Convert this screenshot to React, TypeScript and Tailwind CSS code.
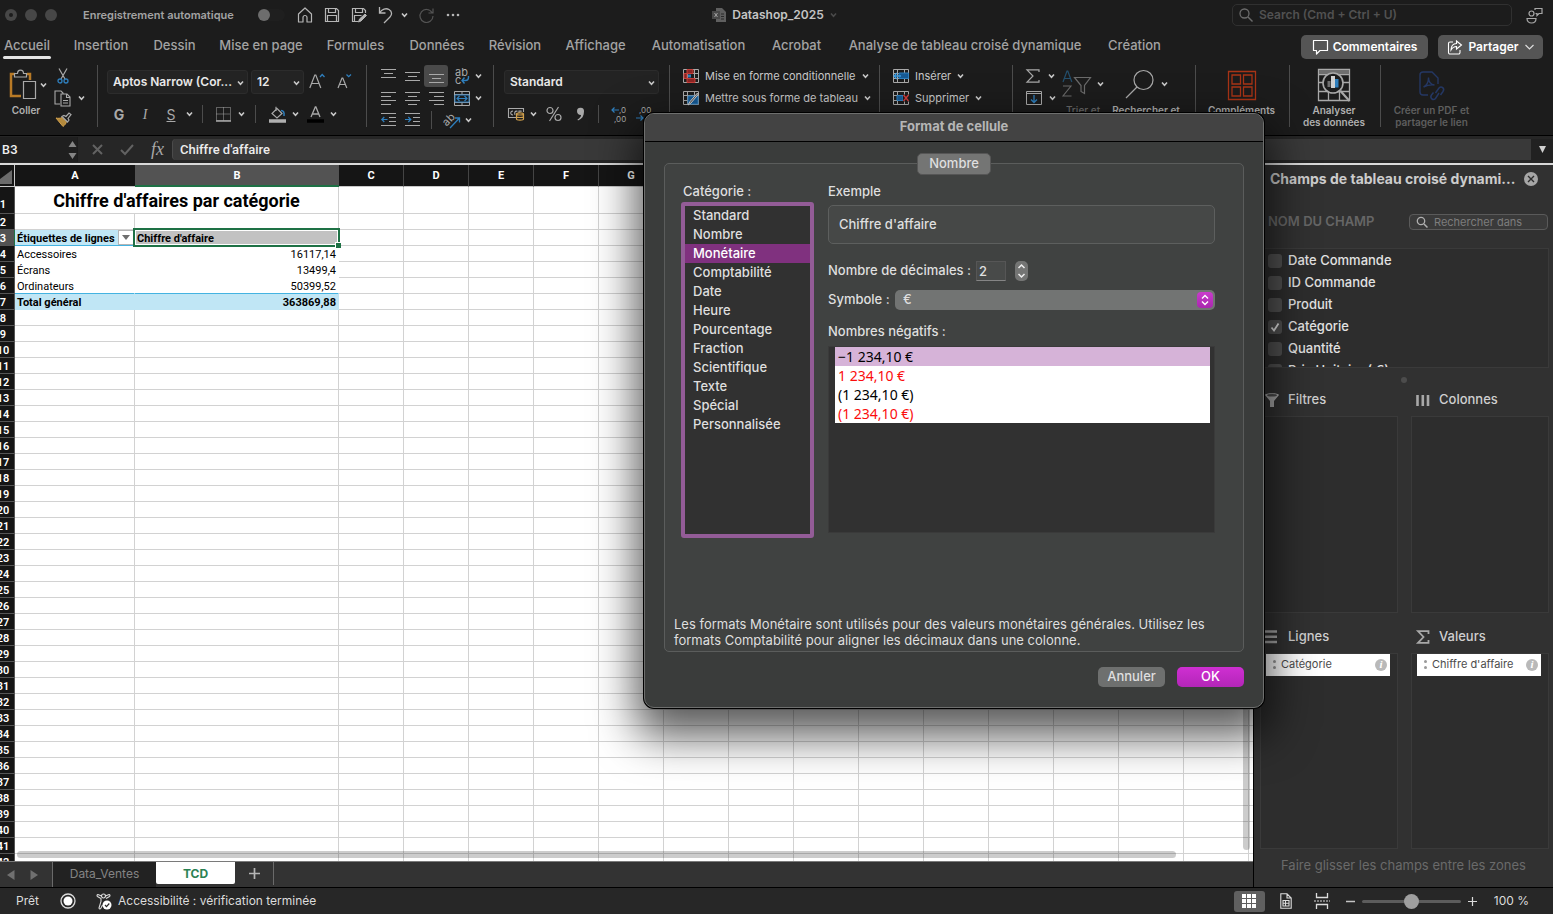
import { type ReactNode } from "react";
import clsx from "clsx";

const GREY = "#a9a9a9";
const BLUE = "#2f7fbd";

const MENU_TABS = [
  { label: "Accueil", width: "w-[54px]" },
  { label: "Insertion", width: "w-[94px]" },
  { label: "Dessin", width: "w-[53px]" },
  { label: "Mise en page", width: "w-[120px]" },
  { label: "Formules", width: "w-[69px]" },
  { label: "Données", width: "w-[94px]" },
  { label: "Révision", width: "w-[62px]" },
  { label: "Affichage", width: "w-[99px]" },
  { label: "Automatisation", width: "w-[107px]" },
  { label: "Acrobat", width: "w-[89px]" },
  { label: "Analyse de tableau croisé dynamique", width: "w-[248px]" },
  { label: "Création", width: "w-[91px]" },
];

const CATEGORIES = [
  "Standard",
  "Nombre",
  "Monétaire",
  "Comptabilité",
  "Date",
  "Heure",
  "Pourcentage",
  "Fraction",
  "Scientifique",
  "Texte",
  "Spécial",
  "Personnalisée",
];

const NEGATIVES = [
  { text: "−1 234,10 €", red: false },
  { text: "1 234,10 €", red: true },
  { text: "(1 234,10 €)", red: false },
  { text: "(1 234,10 €)", red: true },
];

const FIELDS = ["Date Commande", "ID Commande", "Produit", "Catégorie", "Quantité", "Prix Unitaire ( €)"];

// the last column only shows its first few pixels
const COLUMNS = ["C", "D", "E", "F", "G", "H", "I", "J", "K", "L", "M", "N", "O", "P", ""];

interface IconProps {
  w: number;
  h: number;
  children: ReactNode;
  stroke?: string;
  className?: string;
}

function Icon({ w, h, children, stroke = GREY, className }: IconProps) {
  return (
    <svg
      width={w}
      height={h}
      viewBox={`0 0 ${w} ${h}`}
      fill="none"
      stroke={stroke}
      className={clsx("shrink-0 overflow-visible", className)}
      aria-hidden="true"
    >
      {children}
    </svg>
  );
}

function Caret({ color = "#c8c8c8" }: { color?: string }) {
  return (
    <Icon w={7} h={6} stroke={color}>
      <path d="M1 1.5 3.5 4.2 6 1.5" strokeWidth="1.6" />
    </Icon>
  );
}

function Divider() {
  return <div className="w-px h-[62px] mt-[5px] bg-[#4c4c4c] shrink-0" />;
}

function ShortDivider() {
  return <div className="w-px h-[18px] bg-[#4c4c4c] shrink-0" />;
}

function Tool({ label, className, children }: { label: string; className: string; children: ReactNode }) {
  return (
    <button aria-label={label} className={clsx("flex items-center justify-center h-[22px] shrink-0", className)}>
      {children}
    </button>
  );
}

/* ---------- Title bar and tabs ---------- */

function TitleBar() {
  return (
    <header className="flex items-center h-[30px] text-[11px] font-semibold">
      <div className="flex flex-1 items-center">
        <div className="flex gap-2 pl-[5px]">
          <span className="flex size-3 items-center justify-center rounded-full bg-[#474747]">
            <span className="size-1 rounded-full bg-[#1c1c1c]" />
          </span>
          <span className="size-3 rounded-full bg-[#474747]" />
          <span className="size-3 rounded-full bg-[#474747]" />
        </div>
        <span className="ml-[26px] w-[175px] text-[#a3a3a3]">Enregistrement automatique</span>
        <button role="switch" aria-checked="false" aria-label="Enregistrement automatique" className="flex w-[27px] rounded-full bg-[#1f1f1f]">
          <span className="size-3 rounded-full bg-[#6d6d6d]" />
        </button>
        <div className="ml-[6px] flex items-center">
          <Tool label="Accueil" className="w-[27px]">
            <Icon w={16} h={16} stroke="#b5b5b5">
              <path d="M1.5 7 8 1l6.500 6v8H10v-4.500a2 2 0 0 0-4 0V15H1.500z" strokeWidth="1.2" strokeLinejoin="round" />
            </Icon>
          </Tool>
          <Tool label="Enregistrer" className="w-[27px]">
            <Icon w={16} h={16} stroke="#b5b5b5">
              <path d="M1.500 1.500h11l2 2v11h-13zM4.500 1.500v4h7v-4M3.500 14.500v-6h9v6" strokeWidth="1.2" />
            </Icon>
          </Tool>
          <Tool label="Enregistrer sous" className="w-[27px]">
            <Icon w={16} h={16} stroke="#b5b5b5">
              <path d="M7 14.500H1.500v-13h11l2 2V6M4.500 1.500v4h7v-4M3.500 14.500v-6h7" strokeWidth="1.2" />
              <path d="m7.500 15 1-3 5.500-5 1.500 1.500-5.500 5.500z" fill="#b5b5b5" />
            </Icon>
          </Tool>
          <Tool label="Annuler la frappe" className="w-[27px]">
            <Icon w={15} h={16} stroke="#b5b5b5">
              <path d="M1.500 0v6H7.500M1.500 6C4 2 8 .8 11 2.500c3.500 2 3 5.500 1 7.500L6 16" strokeWidth="1.3" />
            </Icon>
          </Tool>
          <Tool label="Historique" className="w-[11px]">
            <Caret />
          </Tool>
          <Tool label="Répéter" className="ml-[2px] w-[28px]">
            <Icon w={15} h={15} stroke="#545454">
              <path d="M13 4.500A6.500 6.500 0 1 0 14 8M14 .5v4.500H9.500" strokeWidth="1.2" />
            </Icon>
          </Tool>
          <Tool label="Plus" className="w-[26px]">
            <Icon w={14} h={4} stroke="none">
              <g fill="#b5b5b5">
                <circle cx="2" cy="2" r="1.3" />
                <circle cx="7" cy="2" r="1.3" />
                <circle cx="12" cy="2" r="1.3" />
              </g>
            </Icon>
          </Tool>
        </div>
      </div>
      <div className="flex items-center gap-1.5 pl-[6px] text-[12px] text-[#c4c4c4]">
        <Icon w={14} h={14} stroke="none">
          <path d="M4 0h6l4 4v10H4z" fill="#5f5f5f" />
          <path d="M0 3h8v8H0z" fill="#484848" />
          <path d="m2.500 5 3 4m0-4-3 4" stroke="#a0a0a0" />
          <path d="M9 6h3M9 8.500h3M9 11h3" stroke="#2b2b2b" />
        </Icon>
        Datashop_2025
        <Caret color="#4a4a4a" />
      </div>
      <div className="flex flex-1 items-center justify-end pr-[10px]">
        <label className="mr-[14px] flex h-[22px] w-[280px] items-center gap-1.5 rounded-[5px] border border-[#303030] pl-[6px]">
          <Icon w={14} h={14} stroke="#6c6c6c">
            <circle cx="5.500" cy="5.500" r="4.500" strokeWidth="1.3" />
            <path d="m9 9 4.500 4.500" strokeWidth="1.4" />
          </Icon>
          <input
            aria-label="Rechercher"
            placeholder="Search (Cmd + Ctrl + U)"
            className="min-w-0 flex-1 bg-transparent text-[12px] font-semibold outline-none placeholder:text-[#515151]"
          />
        </label>
        <Icon w={17} h={17} stroke="#a8a8a8">
          <circle cx="5.500" cy="6.500" r="2.500" strokeWidth="1.2" />
          <path d="M1 11.500h9c0 3-2 4.500-4.500 4.500S1 14.500 1 11.500zM9 3V1.500h7v5h-3l-2 2v-2H9.500" strokeWidth="1.2" />
        </Icon>
      </div>
    </header>
  );
}

function MenuTabs() {
  return (
    <nav className="flex h-[30px] items-start justify-between pr-[10px] text-[13px] font-medium text-[#a3a3a3]">
      <div className="flex">
        {MENU_TABS.map((tab, i) => (
          <button key={tab.label} className={clsx("flex shrink-0 flex-col items-center whitespace-nowrap", tab.width)}>
            <span className="h-[26px] leading-[31px]">{tab.label}</span>
            {i === 0 && <span className="h-[3px] w-[48px] rounded-full bg-[#e4e4e4]" />}
          </button>
        ))}
      </div>
      <div className="flex gap-[10px] pt-[5px] text-[12px] font-semibold text-white">
        <button className="flex h-6 w-[127px] items-center justify-center gap-1 rounded-[5px] bg-[#555555]">
          <Icon w={17} h={16} stroke="#ffffff">
            <path d="M1.500 1.500h14v10H8L4.500 15v-3.500h-3z" strokeWidth="1.2" strokeLinejoin="round" />
          </Icon>
          Commentaires
        </button>
        <button className="flex h-6 w-[105px] items-center justify-center gap-1.5 rounded-[5px] bg-[#555555]">
          <Icon w={15} h={15} stroke="#ffffff">
            <path d="M6 2H3a1.500 1.500 0 0 0-1.500 1.500v9A1.500 1.500 0 0 0 3 14h8.500a1.500 1.500 0 0 0 1.500-1.500V10M9.500 1l5 4-5 4V6.500C7 6.500 5.500 7.500 4 10c0-4 2-6.500 5.500-6.500z" strokeWidth="1.1" />
          </Icon>
          Partager
          <Icon w={9} h={6} stroke="#dddddd">
            <path d="m.5 1 4 4 4-4" strokeWidth="1.2" />
          </Icon>
        </button>
      </div>
    </nav>
  );
}

/* ---------- Ribbon ---------- */

function LinesIcon({ d }: { d: string }) {
  return (
    <Icon w={15} h={14}>
      <path d={d} strokeWidth="1.1" />
    </Icon>
  );
}

function ClipboardGroup() {
  return (
    <div className="flex w-[97px] shrink-0 pt-[5px]">
      <div className="w-[51px] pt-[4px] pl-[9px]">
        <button aria-label="Coller" className="flex items-center gap-[3px]">
          <Icon w={28} h={31}>
            <path d="M6 5H2v22h10M18 5h3v6" stroke="#b87a26" strokeWidth="2.500" />
            <path d="M5.500 8V4.500h3c0-4.500 6-4.500 6 0h3V8z" fill="#1c1c1c" strokeWidth="1.2" />
            <path d="M14.500 12.500h12v17h-12z" fill="#1c1c1c" strokeWidth="1.2" />
          </Icon>
          <Caret />
        </button>
        <div className="w-[34px] text-center text-[10px] leading-[20px] font-semibold text-[#b0b0b0]">Coller</div>
      </div>
      <div className="flex flex-col">
        <Tool label="Couper" className="w-[24px]">
          <Icon w={12} h={16}>
            <path d="M2 .5 8 11M10 .5 4 11" strokeWidth="1.2" />
            <circle cx="3" cy="13" r="2" stroke={BLUE} strokeWidth="1.3" />
            <circle cx="9" cy="13" r="2" stroke={BLUE} strokeWidth="1.3" />
          </Icon>
        </Tool>
        <Tool label="Copier" className="w-[36px] gap-[6px]">
          <Icon w={18} h={17}>
            <path d="M6 14H1V1h6l2 2v1M7 4h6l3 3v9H7zM12.500 4v3.500H16M9 10.500h5M9 13h5" strokeWidth="1.1" />
          </Icon>
          <Caret />
        </Tool>
        <Tool label="Reproduire la mise en forme" className="w-[24px]">
          <Icon w={17} h={16}>
            <path d="m1 6 7 8.500c2-1.500 3-3 3.500-5L7 5.500C5 6.500 3 6.500 1 6z" fill="#b48a3d" stroke="#d1a04c" />
            <path d="m7 4.500 5.500 5.500 1.500-2-1-1.500 3-4L14 1l-3 3.500-2-1z" fill="#1c1c1c" strokeWidth="1.2" />
          </Icon>
        </Tool>
      </div>
    </div>
  );
}

function RibbonSelect({ label, value, className }: { label: string; value: string; className: string }) {
  return (
    <div className={clsx("relative shrink-0", className)}>
      <select
        aria-label={label}
        className="block h-6 w-full appearance-none rounded-[3px] border border-[#2c2c2c] bg-[#232323] pl-[5px] text-[12px] font-semibold text-[#e8e8e8] outline-none"
      >
        <option>{value}</option>
      </select>
      <span className="pointer-events-none absolute top-[10px] right-1">
        <Caret />
      </span>
    </div>
  );
}

function FontGroup() {
  return (
    <div className="w-[268px] shrink-0 pt-[10px] pl-[9px]">
      <div className="flex gap-[3px]">
        <RibbonSelect label="Police" value="Aptos Narrow (Cor..." className="w-[141px]" />
        <RibbonSelect label="Taille" value="12" className="w-[53px]" />
        <Tool label="Agrandir la police" className="w-[20px]">
          <Icon w={16} h={16}>
            <path d="m.8 15 5-13h1l5 13M2.500 10.500h7.500" strokeWidth="1.2" />
            <path d="m11 4 2.200-2.500L15.500 4" stroke={BLUE} strokeWidth="1.3" />
          </Icon>
        </Tool>
        <Tool label="Réduire la police" className="w-[28px]">
          <Icon w={15} h={16}>
            <path d="m1 15 4-10h.8l4 10M2.500 11.500h6" strokeWidth="1.2" />
            <path d="m9.500 1.500 2.200 2.200L14 1.500" stroke={BLUE} strokeWidth="1.3" />
          </Icon>
        </Tool>
      </div>
      <div className="mt-[9px] flex items-center text-[14px] text-[#a9a9a9]">
        <Tool label="Gras" className="w-[24px] font-bold">G</Tool>
        <Tool label="Italique" className="w-[28px] font-['Liberation_Serif',serif] italic">I</Tool>
        <Tool label="Souligné" className="w-[24px] underline">S</Tool>
        <Tool label="Options de soulignement" className="w-[12px]"><Caret /></Tool>
        <span className="w-[7px]" />
        <ShortDivider />
        <Tool label="Bordures" className="ml-[8px] w-[24px]">
          <Icon w={15} h={15}>
            <path d="M.5.5h14v13H.5zM7.500.5v13M.5 7h14" strokeDasharray="1 1" />
            <path d="M0 14h15" strokeWidth="1.500" />
          </Icon>
        </Tool>
        <Tool label="Options de bordures" className="w-[13px]"><Caret /></Tool>
        <span className="w-[7px]" />
        <ShortDivider />
        <Tool label="Couleur de remplissage" className="ml-[8px] w-[26px]">
          <Icon w={17} h={17}>
            <path d="m8 2.500 5 5-5 4.500-5-4.500zM7 5V.8" strokeWidth="1.2" />
            <path d="M12 4.500c2.500 0 3.500 2 3 5.500" stroke={BLUE} strokeWidth="1.500" />
            <path d="M0 15h17" strokeWidth="3.500" stroke="#b0b0b0" />
          </Icon>
        </Tool>
        <Tool label="Options de remplissage" className="w-[10px]"><Caret /></Tool>
        <Tool label="Couleur de police" className="ml-[2px] w-[26px]">
          <Icon w={17} h={17}>
            <path d="m4 11 4.300-10h.6L13 11M5.500 8h6" strokeWidth="1.3" />
            <path d="M0 15h17" strokeWidth="3.500" stroke="#000000" />
          </Icon>
        </Tool>
        <Tool label="Options de couleur" className="w-[10px]"><Caret /></Tool>
      </div>
    </div>
  );
}

function AlignGroup() {
  return (
    <div className="w-[126px] shrink-0 pt-[5px] pl-[9px]">
      <div className="flex">
        <Tool label="Aligner en haut" className="w-[24px]"><LinesIcon d="M0 .5h15M3 4.500h9M0 8.500h15" /></Tool>
        <Tool label="Aligner au centre" className="w-[24px]"><LinesIcon d="M0 3.500h15M3 7.500h9M0 11.500h15" /></Tool>
        <Tool label="Aligner en bas" className="w-[24px] rounded-[3px] bg-[#4a4a4a]"><LinesIcon d="M0 5.500h15M3 9.500h9M0 13.500h15" /></Tool>
        <Tool label="Renvoyer à la ligne" className="w-[29px] gap-[5px] pl-[11px]">
          <svg width="15" height="17" viewBox="0 0 15 17" fill="none" className="shrink-0 overflow-visible" aria-hidden="true">
            <text x="0" y="8" fontSize="11" fill={GREY}>ab</text>
            <text x="0" y="16" fontSize="11" fill={GREY}>c</text>
            <path d="M13.500 8v1.500c0 2-1 3-3 3H7m2.500-3L7 12.500l2.500 3" stroke={BLUE} strokeWidth="1.4" />
          </svg>
          <Caret />
        </Tool>
      </div>
      <div className="flex">
        <Tool label="Aligner à gauche" className="w-[24px]"><LinesIcon d="M0 1.500h15M0 5.500h10M0 9.500h15M0 13.500h10" /></Tool>
        <Tool label="Centrer" className="w-[24px]"><LinesIcon d="M0 1.500h15M3 5.500h9M0 9.500h15M3 13.500h9" /></Tool>
        <Tool label="Aligner à droite" className="w-[24px]"><LinesIcon d="M0 1.500h15M5 5.500h10M0 9.500h15M5 13.500h10" /></Tool>
        <Tool label="Fusionner" className="w-[29px] gap-[5px] pl-[10px]">
          <Icon w={16} h={15}>
            <path d="M.5.5h15v14H.5zM.5 3.500h15M.5 11.500h15M8 .5v3M8 11.500v3" />
            <path d="M1 4h14v7H1z" stroke={BLUE} />
            <path d="M3 7.500h10M5.500 5 3 7.500 5.500 10M10.500 5 13 7.500 10.500 10" stroke={BLUE} strokeWidth="1.2" />
          </Icon>
          <Caret />
        </Tool>
      </div>
      <div className="flex items-center">
        <Tool label="Diminuer le retrait" className="w-[24px]">
          <Icon w={15} h={14}>
            <path d="M0 .5h15M8 4.500h7M8 8.500h7M0 12.500h15" strokeWidth="1.1" />
            <path d="M6.500 6.500H.8M3.300 4 .8 6.500 3.300 9" stroke={BLUE} strokeWidth="1.2" />
          </Icon>
        </Tool>
        <Tool label="Augmenter le retrait" className="w-[24px]">
          <Icon w={15} h={14}>
            <path d="M0 .5h15M8 4.500h7M8 8.500h7M0 12.500h15" strokeWidth="1.1" />
            <path d="M0 6.500h5.800M3.300 4l2.500 2.500L3.300 9" stroke={BLUE} strokeWidth="1.2" />
          </Icon>
        </Tool>
        <span className="w-[7px]" />
        <ShortDivider />
        <Tool label="Orientation" className="ml-[8px] w-[34px] gap-[4px]">
          <svg width="18" height="17" viewBox="0 0 18 17" fill="none" className="shrink-0 overflow-visible" aria-hidden="true">
            <text x="0" y="12" fontSize="11" fill={GREY} transform="rotate(-45 5 9)">ab</text>
            <path d="M7 16 16.500 6M12 6h4.500v4.500" stroke={BLUE} strokeWidth="1.3" />
          </svg>
          <Caret />
        </Tool>
      </div>
    </div>
  );
}

function NumberGroup() {
  return (
    <div className="w-[175px] shrink-0 pt-[10px] pl-[10px]">
      <RibbonSelect label="Format de nombre" value="Standard" className="w-[155px]" />
      <div className="mt-[9px] flex items-center text-[#a9a9a9]">
        <Tool label="Format comptable" className="w-[25px]">
          <Icon w={17} h={14}>
            <path d="M8 10.500H.5V1.500h15V5M5 4.200C2 3.500 2 8.500 5 7.800M9.500 4.200C6.500 3.500 6.500 6 7 7.800M13 5V4h-2v2" strokeWidth="1.1" />
            <path d="M8.500 7c0-1.500 7-1.500 7 0v5c0 1.500-7 1.500-7 0zM8.500 7c0 1.300 7 1.300 7 0M8.500 9.500c0 1.300 7 1.300 7 0" fill="#1c1c1c" stroke="#d1a04c" strokeWidth="1.2" />
          </Icon>
        </Tool>
        <Tool label="Options comptables" className="w-[8px]"><Caret /></Tool>
        <Tool label="Pourcentage" className="w-[33px]">
          <Icon w={16} h={16}>
            <circle cx="4" cy="4.500" r="3" strokeWidth="1.2" />
            <circle cx="12" cy="11.500" r="3" strokeWidth="1.2" />
            <path d="M12.500 1 3.500 15" strokeWidth="1.2" />
          </Icon>
        </Tool>
        <Tool label="Séparateur de milliers" className="w-[21px]">
          <Icon w={9} h={14} stroke="none">
            <path d="M1 4a3.500 3.500 0 1 1 7 .5C8 9 6 12 2 13.500l-.5-1C4 11 5 9.500 5 8 2.500 8 1 6.500 1 4z" fill={GREY} />
          </Icon>
        </Tool>
        <span className="w-[7px]" />
        <ShortDivider />
        <Tool label="Ajouter une décimale" className="ml-[12px] w-[17px]">
          <svg width="17" height="17" viewBox="0 0 17 17" fill="none" className="shrink-0 overflow-visible" aria-hidden="true">
            <text x="8" y="7" fontSize="8" fill={GREY}>,0</text>
            <text x="3" y="16" fontSize="8" fill={GREY}>,00</text>
            <path d="M8 4H1m2.500-2.500L1 4l2.500 2.500" stroke={BLUE} strokeWidth="1.2" />
          </svg>
        </Tool>
        <Tool label="Réduire les décimales" className="ml-[8px] w-[17px]">
          <svg width="17" height="17" viewBox="0 0 17 17" fill="none" className="shrink-0 overflow-visible" aria-hidden="true">
            <text x="3" y="7" fontSize="8" fill={GREY}>,00</text>
            <path d="M0 12h7M4.500 9.500 7 12l-2.500 2.500" stroke={BLUE} strokeWidth="1.2" />
          </svg>
        </Tool>
      </div>
    </div>
  );
}

function GridIcon({ children }: { children: ReactNode }) {
  return (
    <Icon w={16} h={15}>
      <path d="M.5.5h15v13H.5zM4.500.5v13M11.500.5v13M.5 4.500h15M.5 9.500h15" />
      {children}
    </Icon>
  );
}

function TextTool({ label, children }: { label: string; children: ReactNode }) {
  return (
    <button className="flex h-[22px] items-center gap-[6px] text-[11px] whitespace-nowrap text-[#c8c8c8]">
      {children}
      {label}
      <Caret />
    </button>
  );
}

function StyleGroup() {
  return (
    <div className="w-[209px] shrink-0 pt-[5px] pl-[13px]">
      <TextTool label="Mise en forme conditionnelle">
        <GridIcon>
          <path d="M4 .5h6v4H4zM4 9.500h8v4H4zM1 4.500h3v5H1z" fill="#8c2625" stroke="#c5403b" />
          <path d="M5 5.500h3v3H5z" fill={BLUE} stroke="none" />
        </GridIcon>
      </TextTool>
      <TextTool label="Mettre sous forme de tableau">
        <GridIcon>
          <path d="M5 5h10v8H5z" fill="#175a94" stroke={BLUE} />
          <path d="m5 14 2-3.500 7.500-8.500 1 1-7.500 9z" fill="#555555" stroke="#d0d0d0" />
        </GridIcon>
      </TextTool>
    </div>
  );
}

function CellsGroup() {
  return (
    <div className="w-[132px] shrink-0 pt-[5px] pl-[13px]">
      <TextTool label="Insérer">
        <GridIcon>
          <path d="M6 4h9.500v5.500H6z" fill="#175a94" stroke={BLUE} />
          <path d="M8 7H1m3-3L1 7l3 3" stroke="#3a9be0" strokeWidth="1.3" />
        </GridIcon>
      </TextTool>
      <TextTool label="Supprimer">
        <GridIcon>
          <path d="M4 4.500h6v5H4z" fill="#175a94" stroke={BLUE} />
          <path d="M10 3.500h6v7h-6z" fill="#1c1c1c" stroke="none" />
          <path d="m10.500 4 5 6m0-6-5 6" stroke="#d43c3c" strokeWidth="1.4" />
        </GridIcon>
      </TextTool>
    </div>
  );
}

function EditGroup() {
  return (
    <div className="flex w-[182px] shrink-0 items-start pt-[5px] pl-[13px]">
      <div className="w-[31px]">
        <Tool label="Somme automatique" className="w-[29px] gap-[8px]">
          <Icon w={14} h={14}>
            <path d="M13 3V.8H1l6 6.200-6 6.200h12V11" strokeWidth="1.2" />
          </Icon>
          <Caret />
        </Tool>
        <Tool label="Remplissage" className="w-[29px] gap-[7px]">
          <Icon w={16} h={14}>
            <path d="M.5.5h15v13H.5zM.5 2.500h15" />
            <path d="M8 4v7.500M5 8.500l3 3 3-3" stroke={BLUE} strokeWidth="1.3" />
          </Icon>
          <Caret />
        </Tool>
      </div>
      <button className="w-[53px] pl-[5px] text-[10px] font-medium text-[#6b6b6b]">
        <span className="flex h-[34px] items-center gap-[5px] pt-1">
          <Icon w={30} h={28}>
            <path d="m1 12 4-11h.8l4 11M2.200 8.500h6.500" stroke="#24506e" strokeWidth="1.2" />
            <path d="M1 16h8L1 26h8.500" stroke="#6b6b6b" strokeWidth="1.1" />
            <path d="M12.500 7.500h16l-6 8v8l-3.500-2v-6z" stroke="#6b6b6b" strokeWidth="1.2" />
          </Icon>
          <Caret />
        </span>
        <span className="block w-[42px] text-center leading-[22px] whitespace-nowrap">Trier et</span>
      </button>
      <button className="w-[72px] text-[10px] font-semibold text-[#b0b0b0]">
        <span className="flex h-[34px] items-center gap-[6px] pt-1 pl-[15px]">
          <Icon w={30} h={30}>
            <circle cx="18.500" cy="11" r="9.500" strokeWidth="1.2" />
            <path d="M12 18 1 29" strokeWidth="1.2" />
          </Icon>
          <Caret />
        </span>
        <span className="block text-center leading-[22px] whitespace-nowrap">Rechercher et</span>
      </button>
    </div>
  );
}

function BigTool({ lines, width, muted, children }: { lines: string[]; width: string; muted?: boolean; children: ReactNode }) {
  return (
    <button
      className={clsx(
        "flex shrink-0 flex-col items-center pt-[7px] pr-[2px] text-[10px] font-semibold",
        muted ? "text-[#5e5e5e]" : "text-[#b0b0b0]",
        width,
      )}
    >
      <span className="flex h-[37px] items-center">{children}</span>
      {lines.map((line) => (
        <span key={line} className="leading-[12px] whitespace-nowrap">{line}</span>
      ))}
    </button>
  );
}

function Ribbon() {
  return (
    <div className="flex h-[75px] overflow-hidden">
      <ClipboardGroup />
      <Divider />
      <FontGroup />
      <Divider />
      <AlignGroup />
      <Divider />
      <NumberGroup />
      <Divider />
      <StyleGroup />
      <Divider />
      <CellsGroup />
      <Divider />
      <EditGroup />
      <Divider />
      <BigTool lines={["Compléments"]} width="w-[93px]">
        <Icon w={28} h={29} stroke="#a93416">
          <path d="M.5.5h27v28H.5zM4 4h8.500v9H4zM15.500 4H24v9h-8.500zM4 16h8.500v9H4zM15.500 16H24v9h-8.500z" strokeWidth="1.3" />
        </Icon>
      </BigTool>
      <Divider />
      <BigTool lines={["Analyser", "des données"]} width="w-[90px]">
        <Icon w={32} h={33}>
          <path d="M.5.5h31v31H.5zM.5 5.500h31M.5 13.500h31M.5 22.500h31M10.500 22v9M21.500 22v9" strokeWidth="1.3" />
          <path d="M1 3h30" stroke="#6f6f6f" strokeWidth="4" />
          <circle cx="15" cy="14" r="10" fill="#1c1c1c" strokeWidth="1.6" />
          <path d="m22.500 22 9 10" strokeWidth="2.200" />
          <path d="M9.500 12h3v6h-3z" fill="#6f6f6f" stroke="none" />
          <path d="M13 7h4v12h-4z" fill="#d0d0d0" stroke="none" />
          <path d="M17 10h3.500v8.500H17z" fill={BLUE} stroke="none" />
        </Icon>
      </BigTool>
      <Divider />
      <BigTool lines={["Créer un PDF et", "partager le lien"]} width="w-[103px]" muted>
        <Icon w={26} h={30} stroke="#243763">
          <path d="M9 24H4c-1.500 0-3-1-3-3V4c0-2 1-3 3-3h9l6 6v6M4.500 16c3-1.500 5-5.500 5-9.500M9.500 6.500c0 4 2 7 6 7.500-4-.5-8 .5-11 2" strokeWidth="1.4" />
          <path d="m16.500 22 3.500-5c2.500-2.500 6 .5 4 3.500L21.500 24M20 22l-3.500 5.500c-2.500 2.500-6-.5-4-3.500l2-2.500" strokeWidth="1.500" />
        </Icon>
      </BigTool>
    </div>
  );
}

function FormulaBar() {
  return (
    <div className="flex h-[30px] items-stretch border-t border-black border-b-2 border-b-[#d9d9d9] bg-[#262626] text-[11px]">
      <div className="my-px flex w-[78px] items-center border-r border-[#1c1c1c] bg-[#1f1f1f] pl-[2px]">
        <input aria-label="Zone Nom" defaultValue="B3" className="min-w-0 flex-1 bg-transparent text-[12px] font-semibold text-[#eeeeee] outline-none" />
        <Icon w={9} h={18} stroke="none">
          <path d="M4.500 0 8.500 6h-8zM4.500 18l-4-6h8z" fill="#858585" />
        </Icon>
      </div>
      <div className="flex w-[94px] items-center pl-[14px]">
        <button aria-label="Annuler la saisie" className="w-[28px]">
          <Icon w={11} h={11} stroke="#626262"><path d="m1 1 9 9M10 1l-9 9" strokeWidth="2" /></Icon>
        </button>
        <button aria-label="Valider la saisie" className="w-[31px]">
          <Icon w={14} h={11} stroke="#626262"><path d="m1 6 4 4 8-9" strokeWidth="2" /></Icon>
        </button>
        <button aria-label="Insérer une fonction" className="font-['Liberation_Serif',serif] text-[18px] text-[#a9a9a9] italic">fx</button>
      </div>
      <input
        aria-label="Barre de formule"
        defaultValue="Chiffre d'affaire"
        className="my-[3px] min-w-0 flex-1 rounded-l-[4px] border-l border-[#4b4b4b] bg-[#393939] pl-[7px] font-['Roboto',sans-serif] text-[13px] font-medium text-[#ededed] outline-none"
      />
      <button aria-label="Développer la barre de formule" className="my-[3px] flex w-[22px] items-center justify-center bg-[#212121]">
        <Icon w={7} h={7} stroke="none"><path d="M0 0h7L3.500 7z" fill="#d0d0d0" /></Icon>
      </button>
    </div>
  );
}

/* ---------- Sheet ---------- */

function RowHeader({ n }: { n: number }) {
  return (
    <th className={clsx("overflow-hidden border-r border-b border-[#555555] p-0", n === 3 ? "border-r-[#1e7145] bg-[#535353]" : "bg-[#151515]")}>
      <span className={clsx("block w-[18px] text-center text-[11px] leading-[13px] font-semibold text-white -ml-[6px]", n === 1 ? "pt-[8px]" : "pt-[2px]")}>{n}</span>
    </th>
  );
}

function DataCells({ n }: { n: number }) {
  if (n === 1) {
    return (
      <td colSpan={2} className="border-r border-b border-[#d2d2d2] p-0 pt-px text-center text-[18px] leading-[24px] font-bold">
        Chiffre d'affaires par catégorie
      </td>
    );
  }
  if (n === 3) {
    return (
      <>
        <td className="border-r border-b border-r-[#c0e6f5] border-b-[#44b3e1] bg-[#c0e6f5] p-0">
          <div className="flex h-[15px] items-center justify-between pl-[2px] font-bold whitespace-nowrap">
            <span className="pt-[2px]">Étiquettes de lignes</span>
            <button aria-label="Filtrer" className="flex h-[15px] w-[16px] shrink-0 items-center justify-center border border-[#b5b5b5] bg-white">
              <Icon w={8} h={5} stroke="none"><path d="M0 0h8L4 5z" fill="#6e6e6e" /></Icon>
            </button>
          </div>
        </td>
        <td className="relative border-r border-b border-[#d2d2d2] bg-[#c2c2c2] p-0 pt-[2px] pl-[2px] font-bold">
          Chiffre d'affaire
          <span className="absolute -inset-[2px] border-2 border-[#1e7145] outline-1 -outline-offset-3 outline-white" />
          <span className="absolute -right-[3px] -bottom-[3px] size-[6px] border-t border-l border-white bg-[#1e7145]" />
        </td>
      </>
    );
  }
  const values: Record<number, [string, string]> = {
    4: ["Accessoires", "16117,14"],
    5: ["Écrans", "13499,4"],
    6: ["Ordinateurs", "50399,52"],
    7: ["Total général", "363869,88"],
  };
  const row = values[n];
  if (!row) {
    return (
      <>
        <td className="border-r border-b border-[#d2d2d2] p-0" />
        <td className="border-r border-b border-[#d2d2d2] p-0" />
      </>
    );
  }
  const look = clsx(
    "border-r border-b p-0 pt-[2px]",
    n === 7 && "border-[#c0e6f5] bg-[#c0e6f5] font-bold",
    n === 6 && "border-r-white border-b-[#44b3e1]",
    n < 6 && "border-white",
  );
  return (
    <>
      <td className={clsx(look, "pl-[2px]")}>{row[0]}</td>
      <td className={clsx(look, "pr-[2px] text-right")}>{row[1]}</td>
    </>
  );
}

function Sheet() {
  const rows = Array.from({ length: 42 }, (_, i) => i + 1);
  return (
    <div className="relative min-h-0 flex-1 overflow-hidden bg-white">
      <table className="w-[1314px] table-fixed border-separate border-spacing-0 font-['Roboto',sans-serif] text-[11px] leading-[13px] text-black">
        <colgroup>
          <col className="w-[15px]" />
          <col className="w-[120px]" />
          <col className="w-[204px]" />
          {COLUMNS.map((c) => (
            <col key={c} className="w-[65px]" />
          ))}
        </colgroup>
        <thead>
          <tr className="h-[22px] bg-[#151515] text-[11px] font-semibold text-white">
            <th className="border-r border-b border-[#c8c8c8] p-0">
              <Icon w={14} h={18} stroke="none"><path d="M12 3v14H0v-5z" fill="#6b6b6b" /></Icon>
            </th>
            <th className="border-b border-[#c8c8c8] p-0">A</th>
            <th className="border-b-2 border-[#1e7145] bg-[#535353] p-0">B</th>
            {COLUMNS.map((c) => (
              <th key={c} className="border-r border-b border-r-[#444444] border-b-[#c8c8c8] p-0">{c}</th>
            ))}
          </tr>
        </thead>
        <tbody>
          {rows.map((n) => (
            <tr key={n} className={n === 1 ? "h-[27px]" : "h-4"}>
              <RowHeader n={n} />
              <DataCells n={n} />
              {COLUMNS.map((c) => (
                <td key={c} className="border-r border-b border-[#d2d2d2] p-0" />
              ))}
            </tr>
          ))}
        </tbody>
      </table>
      <div className="absolute right-[77px] bottom-[3px] left-[17px] h-[7px] rounded-full bg-black/20" />
      <div className="absolute top-6 right-[3px] bottom-[11px] w-[7px] rounded-full bg-black/20" />
    </div>
  );
}

function SheetTabs() {
  return (
    <div className="flex h-[27px] shrink-0 items-start border-t border-b border-t-[#7a7a7a] border-b-black bg-[#333333] text-[12px]">
      <div className="flex h-full w-[52px] items-center justify-between pr-[14px] pl-[7px]">
        <button aria-label="Feuille précédente"><Icon w={8} h={10} stroke="none"><path d="M7.500 0v10L0 5z" fill="#707070" /></Icon></button>
        <button aria-label="Feuille suivante"><Icon w={8} h={10} stroke="none"><path d="M.5 0v10L8 5z" fill="#707070" /></Icon></button>
      </div>
      <button className="h-full w-[104px] border-l border-[#6a6a6a] bg-[#222222] pb-[2px] text-[#848484]">Data_Ventes</button>
      <button className="h-[22px] w-[79px] rounded-b-[2px] bg-white pt-px font-bold text-[#2a8253]">TCD</button>
      <button aria-label="Nouvelle feuille" className="flex h-[23px] w-[39px] items-center justify-center border-r border-[#6a6a6a]">
        <Icon w={11} h={11} stroke="#b5b5b5"><path d="M5.500 0v11M0 5.500h11" strokeWidth="1.700" /></Icon>
      </button>
    </div>
  );
}

/* ---------- Pivot table pane ---------- */

function Zone({ title, item, icon }: { title: string; item?: string; icon: ReactNode }) {
  return (
    <section className="flex min-h-0 flex-col">
      <h3 className="flex h-[32px] items-center text-[13px] font-medium text-[#cfcfcf]">
        <span className="w-[28px] pl-[5px]">{icon}</span>
        {title}
      </h3>
      <div className="min-h-0 flex-1 border border-[#3a3a3a] bg-[#2d2d2d] pr-[7px] pl-[5px]">
        {item && (
          <div className="flex h-[22px] items-center bg-white pr-[3px] pl-[7px] text-[11px] text-[#4c4c4c]">
            <span className="mr-[5px] flex flex-col gap-[3px]">
              <span className="size-[3px] rounded-full bg-[#9a9a9a]" />
              <span className="size-[3px] rounded-full bg-[#9a9a9a]" />
            </span>
            <span className="flex-1 whitespace-nowrap">{item}</span>
            <span className="flex size-3 items-center justify-center rounded-full bg-[#b9b9b9] font-['Liberation_Serif',serif] text-[11px] leading-none font-bold text-white italic">i</span>
          </div>
        )}
      </div>
    </section>
  );
}

function PivotPane() {
  return (
    <aside className="flex w-[300px] shrink-0 flex-col border-l border-b border-black bg-[#313131]">
      <div className="flex h-[27px] items-center pl-4">
        <h2 className="w-[254px] text-[14px] font-bold whitespace-nowrap text-[#cccccc]">Champs de tableau croisé dynami...</h2>
        <button aria-label="Fermer" className="flex size-[14px] shrink-0 items-center justify-center rounded-full bg-[#a6a6a6]">
          <Icon w={8} h={8} stroke="#2d2d2d"><path d="m1 1 6 6M7 1 1 7" strokeWidth="1.4" /></Icon>
        </button>
      </div>
      <div className="mt-[21px] flex h-[18px] items-center justify-between pr-[5px] pl-[14px]">
        <span className="text-[13px] font-semibold text-[#666666]">NOM DU CHAMP</span>
        <label className="flex h-4 w-[139px] items-center gap-[6px] rounded-[4px] border border-[#5a5a5a] bg-[#3a3a3a] pl-[6px]">
          <Icon w={12} h={12} stroke="#b0b0b0">
            <circle cx="5" cy="5" r="3.700" strokeWidth="1.3" />
            <path d="m8 8 3.500 3.500" strokeWidth="1.500" />
          </Icon>
          <input aria-label="Rechercher un champ" placeholder="Rechercher dans" className="min-w-0 flex-1 bg-transparent text-[11px] outline-none placeholder:text-[#7d7d7d]" />
        </label>
      </div>
      <ul className="mt-[17px] mr-[4px] ml-[6px] h-[120px] overflow-hidden border border-[#3a3a3a] bg-[#2d2d2d] pt-px pl-[7px] text-[13px] font-medium text-[#e2e2e2]">
        {FIELDS.map((field) => (
          <li key={field}>
            <label className="flex h-[22px] items-center gap-[6px]">
              <span className="grid size-[14px] place-items-center">
                <input type="checkbox" defaultChecked={field === "Catégorie"} className="col-start-1 row-start-1 size-[14px] appearance-none rounded-[3px] bg-[#505050]" />
                {field === "Catégorie" && (
                  <Icon w={10} h={10} stroke="#e2e2e2" className="col-start-1 row-start-1">
                    <path d="m1.500 5.500 2.500 3L8.500 1.500" strokeWidth="1.800" />
                  </Icon>
                )}
              </span>
              {field}
            </label>
          </li>
        ))}
      </ul>
      <div className="flex h-[16px] shrink-0 items-end justify-center pb-px">
        <span className="size-[6px] rounded-full bg-[#4c4c4c]" />
      </div>
      <div className="grid min-h-0 flex-1 grid-cols-[138px_138px] grid-rows-2 justify-between gap-y-[8px] pr-[4px] pl-[6px]">
        <Zone title="Filtres" icon={<Icon w={14} h={14} stroke="none"><path d="M0 2c0-2.500 14-2.500 14 0L9 8v6H5V8z" fill="#a8a8a8" /><ellipse cx="7" cy="2.300" rx="5" ry="1.2" fill="#4a4a4a" /></Icon>} />
        <Zone title="Colonnes" icon={<Icon w={14} h={11} stroke="#a8a8a8"><path d="M1.500 0v11M6.800 0v11M12 0v11" strokeWidth="2.600" /></Icon>} />
        <Zone title="Lignes" item="Catégorie" icon={<Icon w={12} h={14} stroke="#a8a8a8"><path d="M0 1.500h12M0 6.800h12M0 12h12" strokeWidth="2.600" /></Icon>} />
        <Zone title="Valeurs" item="Chiffre d'affaire" icon={<Icon w={14} h={14} stroke="#a8a8a8"><path d="M12.500 4V1.200H2L7.500 7 2 12.800h10.500V10" strokeWidth="1.800" /></Icon>} />
      </div>
      <p className="h-[38px] shrink-0 text-center text-[13px] leading-[33px] text-[#6a6a6a]">Faire glisser les champs entre les zones</p>
    </aside>
  );
}

/* ---------- Format dialog ---------- */

function FormatDialog() {
  return (
    <div
      role="dialog"
      aria-label="Format de cellule"
      className="absolute top-[113px] left-[644px] flex w-[620px] flex-col rounded-[10px] border border-[#6e6f6e] bg-[#3a3c3b] text-[12px] font-medium text-[#dfdfdf] shadow-[0_0_0_1px_#000000,0_20px_44px_8px_rgba(0,0,0,0.65)]"
    >
      <h2 className="h-[28px] rounded-t-[9px] border-b border-black bg-[#434343] text-center text-[13px] leading-[25px] font-bold text-[#b6b6b6]">
        Format de cellule
      </h2>
      <div className="mx-[19px] mt-[21px] flex h-[489px] flex-col rounded-[5px] border border-[#5b5d5c] bg-[#404241]">
        <button className="-mt-[11px] h-[22px] w-[74px] shrink-0 self-center rounded-[5px] border border-[#565656] bg-[#747574] text-[13px]">Nombre</button>
        <div className="flex px-[16px] pt-[5px]">
          <div className="w-[133px]">
            <div className="h-[22px] pl-[2px] text-[13px] leading-[22px]" id="cat">Catégorie :</div>
            <ul role="listbox" aria-labelledby="cat" className="h-[336px] rounded-[3px] border-4 border-[#935c97] bg-[#313131] text-[13px] leading-[19px]">
              {CATEGORIES.map((c) => (
                <li key={c} role="option" aria-selected={c === "Monétaire"} className={clsx("pl-[8px]", c === "Monétaire" && "bg-[#80317f] text-white")}>
                  {c}
                </li>
              ))}
            </ul>
          </div>
          <div className="ml-[14px] flex-1 pr-[12px] text-[13px]">
            <div className="h-[25px] leading-[22px]">Exemple</div>
            <div className="h-[39px] rounded-[5px] border border-[#5d5f5e] bg-[#464847] pl-[10px] leading-[37px]">Chiffre d'affaire</div>
            <div className="mt-[17px] flex h-5 items-center">
              <label htmlFor="decimals" className="w-[148px] whitespace-nowrap">Nombre de décimales :</label>
              <input id="decimals" defaultValue="2" className="h-5 w-[30px] border border-[#565656] border-b-[#858585] bg-[#484a49] pl-[2px] outline-none" />
              <button aria-label="Ajuster les décimales" className="ml-[9px] flex h-5 w-[13px] items-center justify-center rounded-[5px] bg-[#747574]">
                <Icon w={9} h={16} stroke="#eeeeee"><path d="m1.500 5 3-3 3 3M1.500 11l3 3 3-3" strokeWidth="1.500" /></Icon>
              </button>
            </div>
            <div className="mt-[9px] flex h-5 items-center">
              <label htmlFor="symbol" className="w-[67px] whitespace-nowrap">Symbole :</label>
              <div className="relative flex-1">
                <select id="symbol" className="block h-5 w-full appearance-none rounded-[5px] bg-[#727473] pl-[8px] outline-none">
                  <option>€</option>
                </select>
                <span className="pointer-events-none absolute top-[2px] right-[2px] flex h-4 w-4 items-center justify-center rounded-[4px] bg-linear-to-b from-[#c93bcc] to-[#a927ae]">
                  <Icon w={8} h={12} stroke="#ffffff"><path d="m1 4.500 3-3 3 3M1 7.500l3 3 3-3" strokeWidth="1.4" /></Icon>
                </span>
              </div>
            </div>
            <div className="mt-[10px] h-[26px] leading-[22px]" id="neg">Nombres négatifs :</div>
            <div className="h-[187px] border border-[#3a3a3a] bg-[#313131] pr-[4px] pl-[6px]">
              <ul role="listbox" aria-labelledby="neg" className="bg-white font-['Noto_Sans',sans-serif] text-[14px] leading-[19px] font-normal">
                {NEGATIVES.map((item, i) => (
                  <li key={i} role="option" aria-selected={i === 0} className={clsx("pl-[3px]", i === 0 && "bg-[#d6b3d8]", item.red ? "text-[#fb0d0d]" : "text-black")}>
                    {item.text}
                  </li>
                ))}
              </ul>
            </div>
          </div>
        </div>
        <p className="mt-auto w-[560px] pb-[3px] pl-[9px] text-[13px] leading-4 font-normal">
          Les formats Monétaire sont utilisés pour des valeurs monétaires générales. Utilisez les formats Comptabilité pour aligner les décimaux dans une colonne.
        </p>
      </div>
      <div className="mt-[15px] mr-[19px] mb-[20px] flex justify-end gap-3 text-[13px]">
        <button className="h-5 w-[67px] rounded-[5px] bg-[#6e706f]">Annuler</button>
        <button className="h-5 w-[67px] rounded-[5px] bg-linear-to-b from-[#cf2fd2] to-[#b326b8] text-white">OK</button>
      </div>
    </div>
  );
}

function StatusBar() {
  return (
    <footer className="flex h-[26px] shrink-0 items-center bg-[#272727] text-[12px] text-[#dcdcdc]">
      <span className="w-[60px] pl-4">Prêt</span>
      <button aria-label="Enregistrer une macro">
        <Icon w={16} h={16} stroke="#dcdcdc">
          <circle cx="8" cy="8" r="7" strokeWidth="1.3" />
          <circle cx="8" cy="8" r="4.500" fill="#ffffff" stroke="none" />
        </Icon>
      </button>
      <button className="ml-[20px] flex items-center gap-[6px]">
        <Icon w={16} h={17} stroke="#dcdcdc">
          <circle cx="7.500" cy="3" r="2" strokeWidth="1.2" />
          <path d="M5.500 3 2 1.500C.8 1.500.8 3 1.500 3.500L5 5.500v3L3 15c.5 1.500 1.500 1 2 0l1.500-3M9.500 3 13 1.500c1.200 0 1.200 1.500.5 2L10 5.500" strokeWidth="1.1" />
          <circle cx="11" cy="12" r="4.500" fill="#ffffff" stroke="none" />
          <path d="m9 12 1.500 1.700 2.800-3.200" stroke="#272727" strokeWidth="1.2" />
        </Icon>
        Accessibilité : vérification terminée
      </button>
      <div className="ml-auto flex items-center pr-[24px]">
        <button aria-label="Normal" className="flex h-[21px] w-[31px] items-center justify-center rounded-[3px] bg-[#606060]">
          <Icon w={14} h={14} stroke="none">
            <path d="M0 0h4v4H0zM5 0h4v4H5zM10 0h4v4h-4zM0 5h4v4H0zM5 5h4v4H5zM10 5h4v4h-4zM0 10h4v4H0zM5 10h4v4H5zM10 10h4v4h-4z" fill="#ffffff" />
          </Icon>
        </button>
        <button aria-label="Mise en page" className="flex w-[42px] justify-center">
          <Icon w={12} h={16} stroke="#dcdcdc">
            <path d="M.8.8H7l4.200 4.200v10.200H.8zM7 1v4h4M3 7.500h6v5.500H3zM3 10.200h6M5.500 7.500V13" strokeWidth="1.1" />
          </Icon>
        </button>
        <button aria-label="Aperçu des sauts de page" className="flex w-[30px] justify-center">
          <Icon w={16} h={16} stroke="#dcdcdc">
            <path d="M2.500 0v4.500h11V0M2.500 16v-4.500h11V16" strokeWidth="1.3" />
            <path d="M0 8h16" strokeDasharray="2 1" />
          </Icon>
        </button>
        <button aria-label="Zoom arrière" className="ml-[9px]"><Icon w={9} h={9} stroke="#c4c4c4"><path d="M0 4.500h9" strokeWidth="1.500" /></Icon></button>
        <input
          type="range"
          aria-label="Zoom"
          min={0}
          max={200}
          defaultValue={100}
          className="mx-[7px] h-[3px] w-[99px] appearance-none rounded-full bg-[#5c5c5c] [&::-webkit-slider-thumb]:size-[15px] [&::-webkit-slider-thumb]:appearance-none [&::-webkit-slider-thumb]:rounded-full [&::-webkit-slider-thumb]:bg-[#9f9f9f]"
        />
        <button aria-label="Zoom avant"><Icon w={9} h={9} stroke="#dcdcdc"><path d="M0 4.500h9M4.500 0v9" strokeWidth="1.2" /></Icon></button>
        <span className="ml-[17px] whitespace-nowrap">100 %</span>
      </div>
    </footer>
  );
}

export default function App() {
  return (
    <div className="relative flex h-screen flex-col overflow-hidden bg-[#1c1c1c] font-['Inter',sans-serif] text-[#bebebe]">
      <TitleBar />
      <MenuTabs />
      <Ribbon />
      <FormulaBar />
      <main className="flex min-h-0 flex-1">
        <div className="flex min-w-0 flex-1 flex-col">
          <Sheet />
          <SheetTabs />
        </div>
        <PivotPane />
      </main>
      <StatusBar />
      <FormatDialog />
    </div>
  );
}
